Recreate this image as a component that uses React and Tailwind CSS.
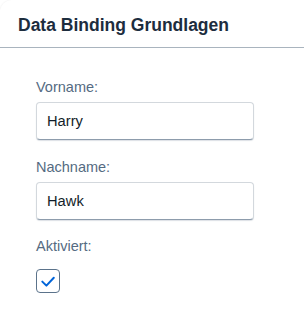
export default function App() {
  return (
    <div className="w-[304px] h-[310px] bg-white" style={{ fontFamily: '"Liberation Sans", Arial, sans-serif' }}>
      <div className="h-full rounded-tl-[12px] bg-white shadow-[0_0_2px_rgba(0,0,0,0.08)]">
        <div className="h-[48px] border-b border-[#a9b4be] pl-[18px] pt-[15px]">
          <h1 className="text-[17.5px] font-bold text-[#1d2d3e] leading-[20px]">Data Binding Grundlagen</h1>
        </div>
        <div className="pl-[36px] pt-[30px] flex flex-col">
          <label className="text-[14.5px] text-[#556b82] leading-[18px]">Vorname:</label>
          <div className="mt-[6px] w-[218px] h-[38px] rounded-[4px] border border-[#d3d8dd] border-b-[#8d9cac] bg-white flex items-center pl-[10px] shadow-[0_1px_1px_rgba(85,107,130,0.2)]">
            <span className="text-[14.7px] text-[#131e29] leading-[18px]">Harry</span>
          </div>
          <label className="mt-[18px] text-[14.5px] text-[#556b82] leading-[18px]">Nachname:</label>
          <div className="mt-[6px] w-[218px] h-[38px] rounded-[4px] border border-[#d3d8dd] border-b-[#8d9cac] bg-white flex items-center pl-[10px] shadow-[0_1px_1px_rgba(85,107,130,0.2)]">
            <span className="text-[14.7px] text-[#131e29] leading-[18px]">Hawk</span>
          </div>
          <label className="mt-[17px] text-[14.5px] text-[#556b82] leading-[18px]">Aktiviert:</label>
          <div className="mt-[14px] w-[24px] h-[24px] rounded-[4px] border border-[#5b738b] bg-white relative">
            <svg className="absolute left-0 top-0" width="24" height="24" viewBox="0 0 24 24" fill="none" style={{ margin: -1 }}>
              <path d="M6.3 12.6 L10.4 16.6 L17.8 8.8" stroke="#0064d9" strokeWidth="2" strokeLinecap="round" strokeLinejoin="round" />
            </svg>
          </div>
        </div>
      </div>
    </div>
  );
}
